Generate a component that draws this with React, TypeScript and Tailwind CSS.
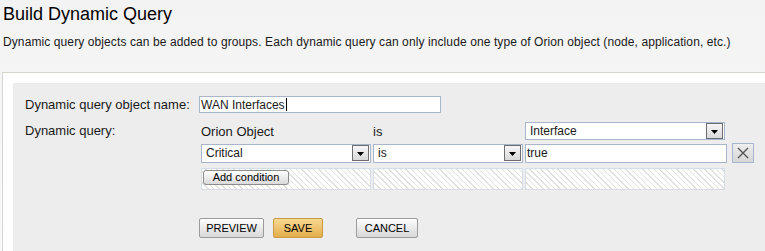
import React from "react";

const font = "font-['Liberation_Sans',Arial,sans-serif]";
const hatch =
  "bg-white bg-[repeating-linear-gradient(45deg,#e0e0e0_0px,#e0e0e0_1px,transparent_1px,transparent_4px)] border border-[#d5dde6]";

function Arrow() {
  return (
    <span className="flex h-[16px] w-[17px] items-center justify-center border border-[#6e6e6e] bg-gradient-to-b from-[#f6f6f6] to-[#d9d9d9]">
      <svg width="7" height="4" viewBox="0 0 7 4" className="mt-[2px]">
        <polygon points="0,0 7,0 3.5,4" fill="#000" />
      </svg>
    </span>
  );
}

function Select({ value, h = "h-[19px]" }: { value: string; h?: string }) {
  return (
    <div
      className={`flex ${h} items-center justify-between border border-[#a7b6ca] bg-white pl-[4px] pr-[1px] text-[12px] leading-[14px] text-[#1a1a1a]`}
    >
      <span>{value}</span>
      <Arrow />
    </div>
  );
}

function Btn({ label, gold, w }: { label: string; gold?: boolean; w: string }) {
  return (
    <button
      className={`${w} h-[20px] rounded-[2px] border text-[11px] leading-none text-black ${
        gold
          ? "border-[#c99a46] bg-gradient-to-b from-[#f8d990] to-[#e4ad4a]"
          : "border-[#9b9b9b] bg-gradient-to-b from-[#fdfdfd] to-[#d8d8d8]"
      }`}
    >
      {label}
    </button>
  );
}

export default function App() {
  return (
    <div
      className={`${font} h-[251px] w-[765px] overflow-hidden bg-gradient-to-b from-[#f3f3f3] to-[#f9f9f8] text-[#1a1a1a]`}
    >
      <div className="pl-[3px] pt-[3px]">
        <h1 className="text-[18px] leading-[22px] text-black">Build Dynamic Query</h1>
        <p className="mt-[10px] text-[12px] leading-[14px] tracking-[0.1px]">
          Dynamic query objects can be added to groups. Each dynamic query can only include one type
          of Orion object (node, application, etc.)
        </p>
      </div>

      <div className="ml-[2px] mt-[23px] border-l border-t border-[#d6d6cc] bg-white pl-[10px] pt-[10px]">
        <div className="h-[200px] bg-[#ededed] pl-[12px] pt-[13px] text-[12px] leading-[14px]">
          <div className="grid grid-cols-[174px_1fr] items-center">
            <span className="text-[13px] leading-[15px]">Dynamic query object name:</span>
            <div className="flex h-[17px] w-[242px] items-center border border-[#a7b6ca] bg-white pl-[1px]">
              WAN Interfaces
              <span className="ml-[1px] h-[13px] w-px bg-black" />
            </div>
          </div>

          <div className="mt-[9px] grid grid-cols-[174px_1fr]">
            <span className="pt-[1px] text-[13px] leading-[15px]">Dynamic query:</span>
            <div className="ml-[2px]">
              <div className="grid grid-cols-[170px_150px_200px] gap-x-[2px] text-[13px] leading-[15px]">
                <div className="flex h-[18px] items-center">Orion Object</div>
                <div className="flex h-[18px] items-center">is</div>
                <Select value="Interface" h="h-[18px]" />
              </div>

              <div className="mt-[3px] flex items-center">
                <div className="grid grid-cols-[170px_150px_202px] gap-x-[2px]">
                  <Select value="Critical" />
                  <Select value="is" />
                  <div className="flex h-[19px] items-center border border-[#a7b6ca] bg-white pl-[1px]">
                    true
                  </div>
                </div>
                <button className="ml-[5px] flex h-[20px] w-[22px] items-center justify-center border border-[#a7b6ca] bg-gradient-to-b from-[#eeeeee] to-[#d6d6d6]">
                  <svg width="12" height="12" viewBox="0 0 12 12">
                    <path d="M1 1 L11 11 M11 1 L1 11" stroke="#555" strokeWidth="1.4" />
                  </svg>
                </button>
              </div>

              <div className="mt-[5px] grid grid-cols-[170px_150px_200px] gap-x-[2px]">
                <div className={`${hatch} h-[22px] pl-px pt-px`}>
                  <button className="flex h-[15px] w-[86px] items-center justify-center rounded-[3px] border border-[#8c8c8c] bg-gradient-to-b from-[#ffffff] to-[#dadada] text-[11px] leading-none text-black">
                    Add condition
                  </button>
                </div>
                <div className={`${hatch} h-[22px]`} />
                <div className={`${hatch} h-[22px]`} />
              </div>
            </div>
          </div>

          <div className="mt-[28px] flex pl-[174px]">
            <Btn label="PREVIEW" w="w-[65px]" />
            <span className="w-[9px]" />
            <Btn label="SAVE" gold w="w-[50px]" />
            <span className="w-[33px]" />
            <Btn label="CANCEL" w="w-[62px]" />
          </div>
        </div>
      </div>
    </div>
  );
}
